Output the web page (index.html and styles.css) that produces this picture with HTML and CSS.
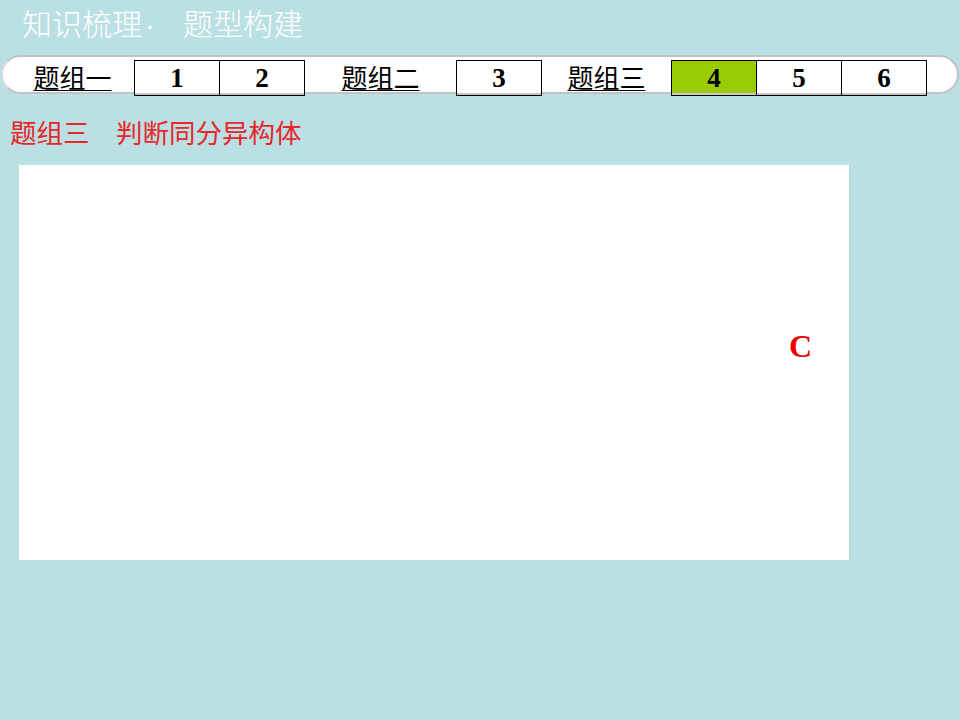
FILE: index.html
```html
<!DOCTYPE html>
<html lang="zh-CN">

<head>
    <meta charset="UTF-8" />
    <meta name="viewport" content="width=device-width, initial-scale=1.0" />
    <title>知识梳理 题型构建</title>
    <link rel="stylesheet" href="styles.css">
</head>

<body>
    <div class="header">
        <h1>知识梳理<span class="dot">·</span><span class="sub">题型构建</span></h1>
    </div>

    <div class="nav">
        <a href="#" class="group g1">题组一</a>
        <a href="#" class="num">1</a>
        <a href="#" class="num next">2</a>
        <a href="#" class="group g2">题组二</a>
        <a href="#" class="num">3</a>
        <a href="#" class="group g3">题组三</a>
        <a href="#" class="num active">4</a>
        <a href="#" class="num next">5</a>
        <a href="#" class="num next">6</a>
    </div>

    <h2 class="topic">题组三　判断同分异构体</h2>

    <div class="panel">
        <span class="answer">C</span>
    </div>
</body>

</html>
```

FILE: styles.css
```css
* {
    box-sizing: border-box;
    margin: 0;
    padding: 0;
}

body {
    background-color: #bbe0e3;
    font-family: "Noto Sans CJK SC", "Noto Sans", sans-serif;
    width: 960px;
    height: 720px;
    overflow: hidden;
}

.header {
    height: 55px;
    padding: 7px 0 0 22px;
}

.header h1 {
    color: #fff;
    font-size: 30px;
    font-weight: 300;
    line-height: 30px;
}

.header .dot {
    font-family: "Liberation Sans", sans-serif;
    margin-left: 3px;
}

.header .sub {
    margin-left: 28px;
}

/* pill shaped navigation bar */
.nav {
    display: flex;
    align-items: flex-start;
    height: 39px;
    margin: 0 1px;
    padding-left: 8px;
    background: #fff;
    border: 2px solid #c2c2c2;
    border-left-color: #dcdcdc;
    border-radius: 20px;
}

.nav a {
    color: #000;
    text-decoration: none;
}

.group {
    font-size: 26px;
    line-height: 26px;
    margin-top: 7px;
    text-align: center;
    text-decoration: underline !important;
    text-decoration-thickness: 1px !important;
    text-underline-offset: 2px;
}

.g1 { width: 123px; }
.g2 { width: 151px; }
.g3 { width: 129px; }

.num {
    display: flex;
    align-items: center;
    justify-content: center;
    width: 86px;
    height: 36px;
    margin-top: 3px;
    margin-bottom: -4px;
    background: #fff;
    border: 1px solid #000;
    box-shadow: inset 0 -2px 0 #c8c8c8;
    font-family: "Liberation Serif", serif;
    font-weight: bold;
    font-size: 27px;
}

.num.next {
    margin-left: -1px;
}

.num.active {
    background: #99cc00;
}

.topic {
    margin: 25px 0 0 10px;
    color: #e8262b;
    font-size: 26.5px;
    font-weight: normal;
    line-height: 26px;
}

.panel {
    display: flex;
    justify-content: flex-end;
    width: 830px;
    height: 395px;
    margin: 20px 0 0 19px;
    padding: 165px 37px 0 0;
    background: #fff;
}

.answer {
    color: #ee0000;
    font-family: "Liberation Serif", serif;
    font-weight: bold;
    font-size: 32px;
    line-height: 32px;
    height: 32px;
}
```
